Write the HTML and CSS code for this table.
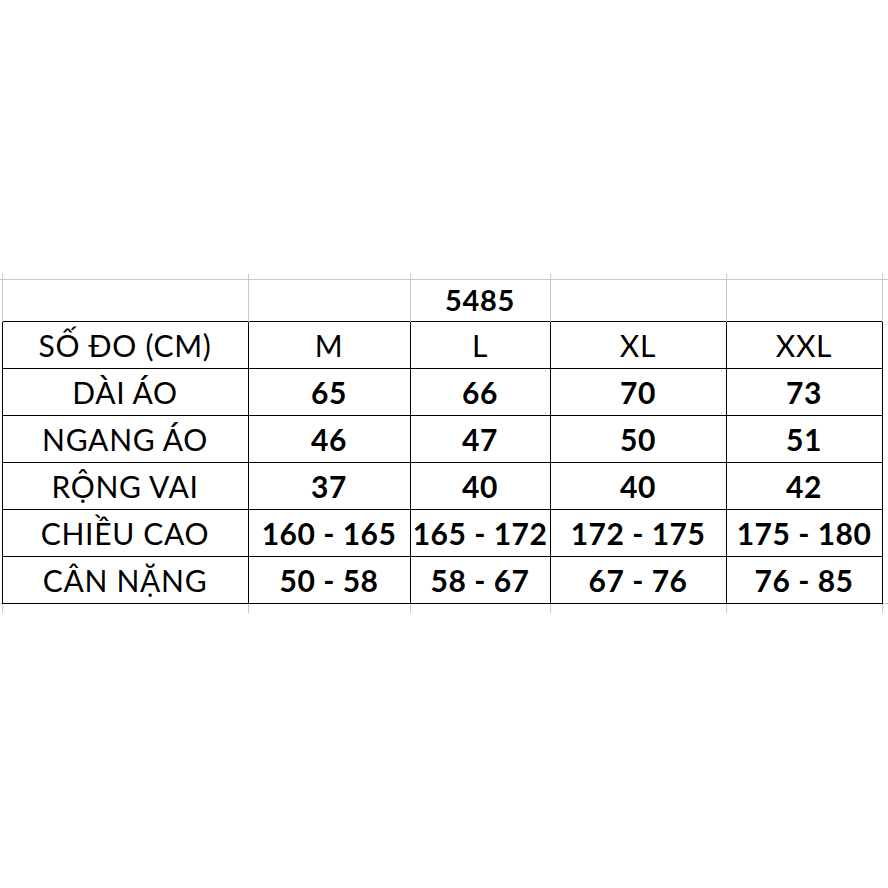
FILE: index.html
```html
<!DOCTYPE html>
<html lang="vi">
<head>
<meta charset="utf-8">
<title>Bảng size 5485</title>
<link rel="stylesheet" href="styles.css">
</head>
<body>
<div class="sheet">
  <table class="grid">
    <colgroup>
      <col class="c-edge-l">
      <col class="c-label">
      <col class="c-m">
      <col class="c-l">
      <col class="c-xl">
      <col class="c-xxl">
      <col class="c-edge-r">
    </colgroup>
    <tbody>
      <tr class="stub-top">
        <td class="edge"></td><td class="g"></td><td class="g"></td><td class="g"></td><td class="g"></td><td class="g"></td><td class="edge"></td>
      </tr>
      <tr class="title-row">
        <td class="edge gt"></td>
        <td class="g gt"></td>
        <td class="g gt"></td>
        <td class="g gt title">5485</td>
        <td class="g gt"></td>
        <td class="g gt"></td>
        <td class="edge gt"></td>
      </tr>
      <tr class="row">
        <td class="edge"></td>
        <td class="b label">SỐ ĐO (CM)</td>
        <td class="b">M</td>
        <td class="b">L</td>
        <td class="b">XL</td>
        <td class="b">XXL</td>
        <td class="edge"></td>
      </tr>
      <tr class="row">
        <td class="edge"></td>
        <td class="b label">DÀI ÁO</td>
        <td class="b v">65</td>
        <td class="b v">66</td>
        <td class="b v">70</td>
        <td class="b v">73</td>
        <td class="edge"></td>
      </tr>
      <tr class="row">
        <td class="edge"></td>
        <td class="b label">NGANG ÁO</td>
        <td class="b v">46</td>
        <td class="b v">47</td>
        <td class="b v">50</td>
        <td class="b v">51</td>
        <td class="edge"></td>
      </tr>
      <tr class="row">
        <td class="edge"></td>
        <td class="b label">RỘNG VAI</td>
        <td class="b v">37</td>
        <td class="b v">40</td>
        <td class="b v">40</td>
        <td class="b v">42</td>
        <td class="edge"></td>
      </tr>
      <tr class="row">
        <td class="edge"></td>
        <td class="b label">CHIỀU CAO</td>
        <td class="b v">160 - 165</td>
        <td class="b v">165 - 172</td>
        <td class="b v">172 - 175</td>
        <td class="b v">175 - 180</td>
        <td class="edge"></td>
      </tr>
      <tr class="row">
        <td class="edge"></td>
        <td class="b label">CÂN NẶNG</td>
        <td class="b v">50 - 58</td>
        <td class="b v">58 - 67</td>
        <td class="b v">67 - 76</td>
        <td class="b v">76 - 85</td>
        <td class="edge"></td>
      </tr>
      <tr class="stub-bottom">
        <td class="edge gt"></td><td class="g gt"></td><td class="g gt"></td><td class="g gt"></td><td class="g gt"></td><td class="g gt"></td><td class="edge gt"></td>
      </tr>
    </tbody>
  </table>
</div>
</body>
</html>
```
FILE: styles.css
```css
html, body {
  margin: 0;
  padding: 0;
  background: #ffffff;
}

.sheet {
  padding-top: 274px;
  width: 888px;
  height: 614px;
  overflow: hidden;
}

.grid {
  border-collapse: collapse;
  table-layout: fixed;
  width: 888px;
  font-family: Lato, "Open Sans", "Liberation Sans", sans-serif;
  font-size: 30px;
  line-height: 28px;
  letter-spacing: 0.7px;
  color: #000;
}

.c-edge-l { width: 2px; }
.c-label { width: 246px; }
.c-m { width: 162px; }
.c-l { width: 140px; }
.c-xl { width: 176px; }
.c-xxl { width: 156px; }
.c-edge-r { width: 6px; }

.grid td {
  padding: 0 0 9px 0;
  text-align: center;
  vertical-align: bottom;
  white-space: nowrap;
  overflow: visible;
}

.stub-top { height: 5px; }
.stub-top td { padding: 0; }
.title-row { height: 42px; }
.row { height: 47px; }
.stub-bottom { height: 10px; }
.stub-bottom td { padding: 0; }

.g {
  border-left: 1px solid #c9c9d1;
  border-right: 1px solid #c9c9d1;
}

.gt {
  border-top: 1px solid #c9c9d1;
}

.b {
  border: 1px solid #000;
}

.title {
  font-weight: 700;
  font-size: 29px;
  padding-bottom: 7px !important;
}

.v {
  font-weight: 700;
  letter-spacing: 0.5px;
}
```
